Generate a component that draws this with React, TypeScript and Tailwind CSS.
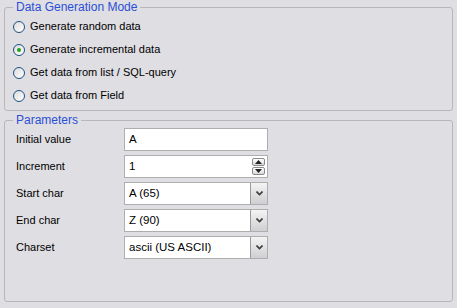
import React from 'react';

const font = { fontFamily: '"Liberation Sans", Arial, sans-serif' };

const radios = [
  { label: 'Generate random data', checked: false },
  { label: 'Generate incremental data', checked: true },
  { label: 'Get data from list / SQL-query', checked: false },
  { label: 'Get data from Field', checked: false },
];

const Radio = ({ checked }: { checked: boolean }) => (
  <span className="w-[12px] h-[12px] rounded-full border border-[#1c5180] bg-gradient-to-br from-[#dcdcdc] to-white flex items-center justify-center shrink-0">
    {checked && <span className="w-[4px] h-[4px] rounded-full bg-[#21a121]" />}
  </span>
);

const Chevron = () => (
  <svg width="7" height="5" viewBox="0 0 7 5">
    <path d="M0.5 0.5 L3.5 3.5 L6.5 0.5" stroke="#3b3b3b" strokeWidth="1.6" fill="none" />
  </svg>
);

const Arrow = ({ up }: { up: boolean }) => (
  <span className="w-[13px] h-[8px] border border-[#8a8a8a] rounded-[2px] bg-gradient-to-b from-white to-[#d8d8d8] flex items-center justify-center">
    <svg width="7" height="4" viewBox="0 0 7 4">
      <path d={up ? 'M0 4 L3.5 0 L7 4 Z' : 'M0 0 L3.5 4 L7 0 Z'} fill="#222" />
    </svg>
  </span>
);

const TextBox = ({ value, children }: { value: string; children?: React.ReactNode }) => (
  <div className="w-[144px] h-[23px] bg-white border border-[#aeaeae] flex items-center">
    <span className="flex-1 pl-[4px] text-[11.5px] text-black">{value}</span>
    {children}
  </div>
);

const Combo = ({ value }: { value: string }) => (
  <TextBox value={value}>
    <span className="w-[17px] h-[21px] bg-gradient-to-b from-[#f4f4f4] to-[#cfcfd3] border-l border-[#9a9a9a] flex items-center justify-center">
      <Chevron />
    </span>
  </TextBox>
);

const params = [
  { label: 'Initial value', node: <TextBox value="A" /> },
  {
    label: 'Increment',
    node: (
      <TextBox value="1">
        <span className="flex flex-col gap-[1px] pr-[2px]">
          <Arrow up />
          <Arrow up={false} />
        </span>
      </TextBox>
    ),
  },
  { label: 'Start char', node: <Combo value="A (65)" /> },
  { label: 'End char', node: <Combo value="Z (90)" /> },
  { label: 'Charset', node: <Combo value="ascii (US ASCII)" /> },
];

export default function App() {
  return (
    <div className="w-[457px] h-[308px] bg-[#dfdee3] pl-[4px] pr-[4px] pt-[1px] text-[11px] text-black flex flex-col" style={font}>
      <fieldset className="border border-[#b9b6bc] rounded-[3px] h-[110px] m-0 p-0">
        <legend className="ml-[8px] px-[3px] text-[#2a4fd6] text-[12px] leading-[12px]">Data Generation Mode</legend>
        <div className="flex flex-col gap-[8px] pt-[6px] pl-[8px]">
          {radios.map(r => (
            <div key={r.label} className="flex items-center gap-[5px] h-[15px]">
              <Radio checked={r.checked} />
              <span>{r.label}</span>
            </div>
          ))}
        </div>
      </fieldset>
      <fieldset className="border border-[#b9b6bc] rounded-[3px] h-[188px] mt-[3px] m-0 p-0">
        <legend className="ml-[8px] px-[3px] text-[#2a4fd6] text-[12px] leading-[12px]">Parameters</legend>
        <div className="flex flex-col gap-[4px] pt-[2px] pl-[11px]">
          {params.map(p => (
            <div key={p.label} className="flex items-center">
              <span className="w-[108px]">{p.label}</span>
              {p.node}
            </div>
          ))}
        </div>
      </fieldset>
    </div>
  );
}
